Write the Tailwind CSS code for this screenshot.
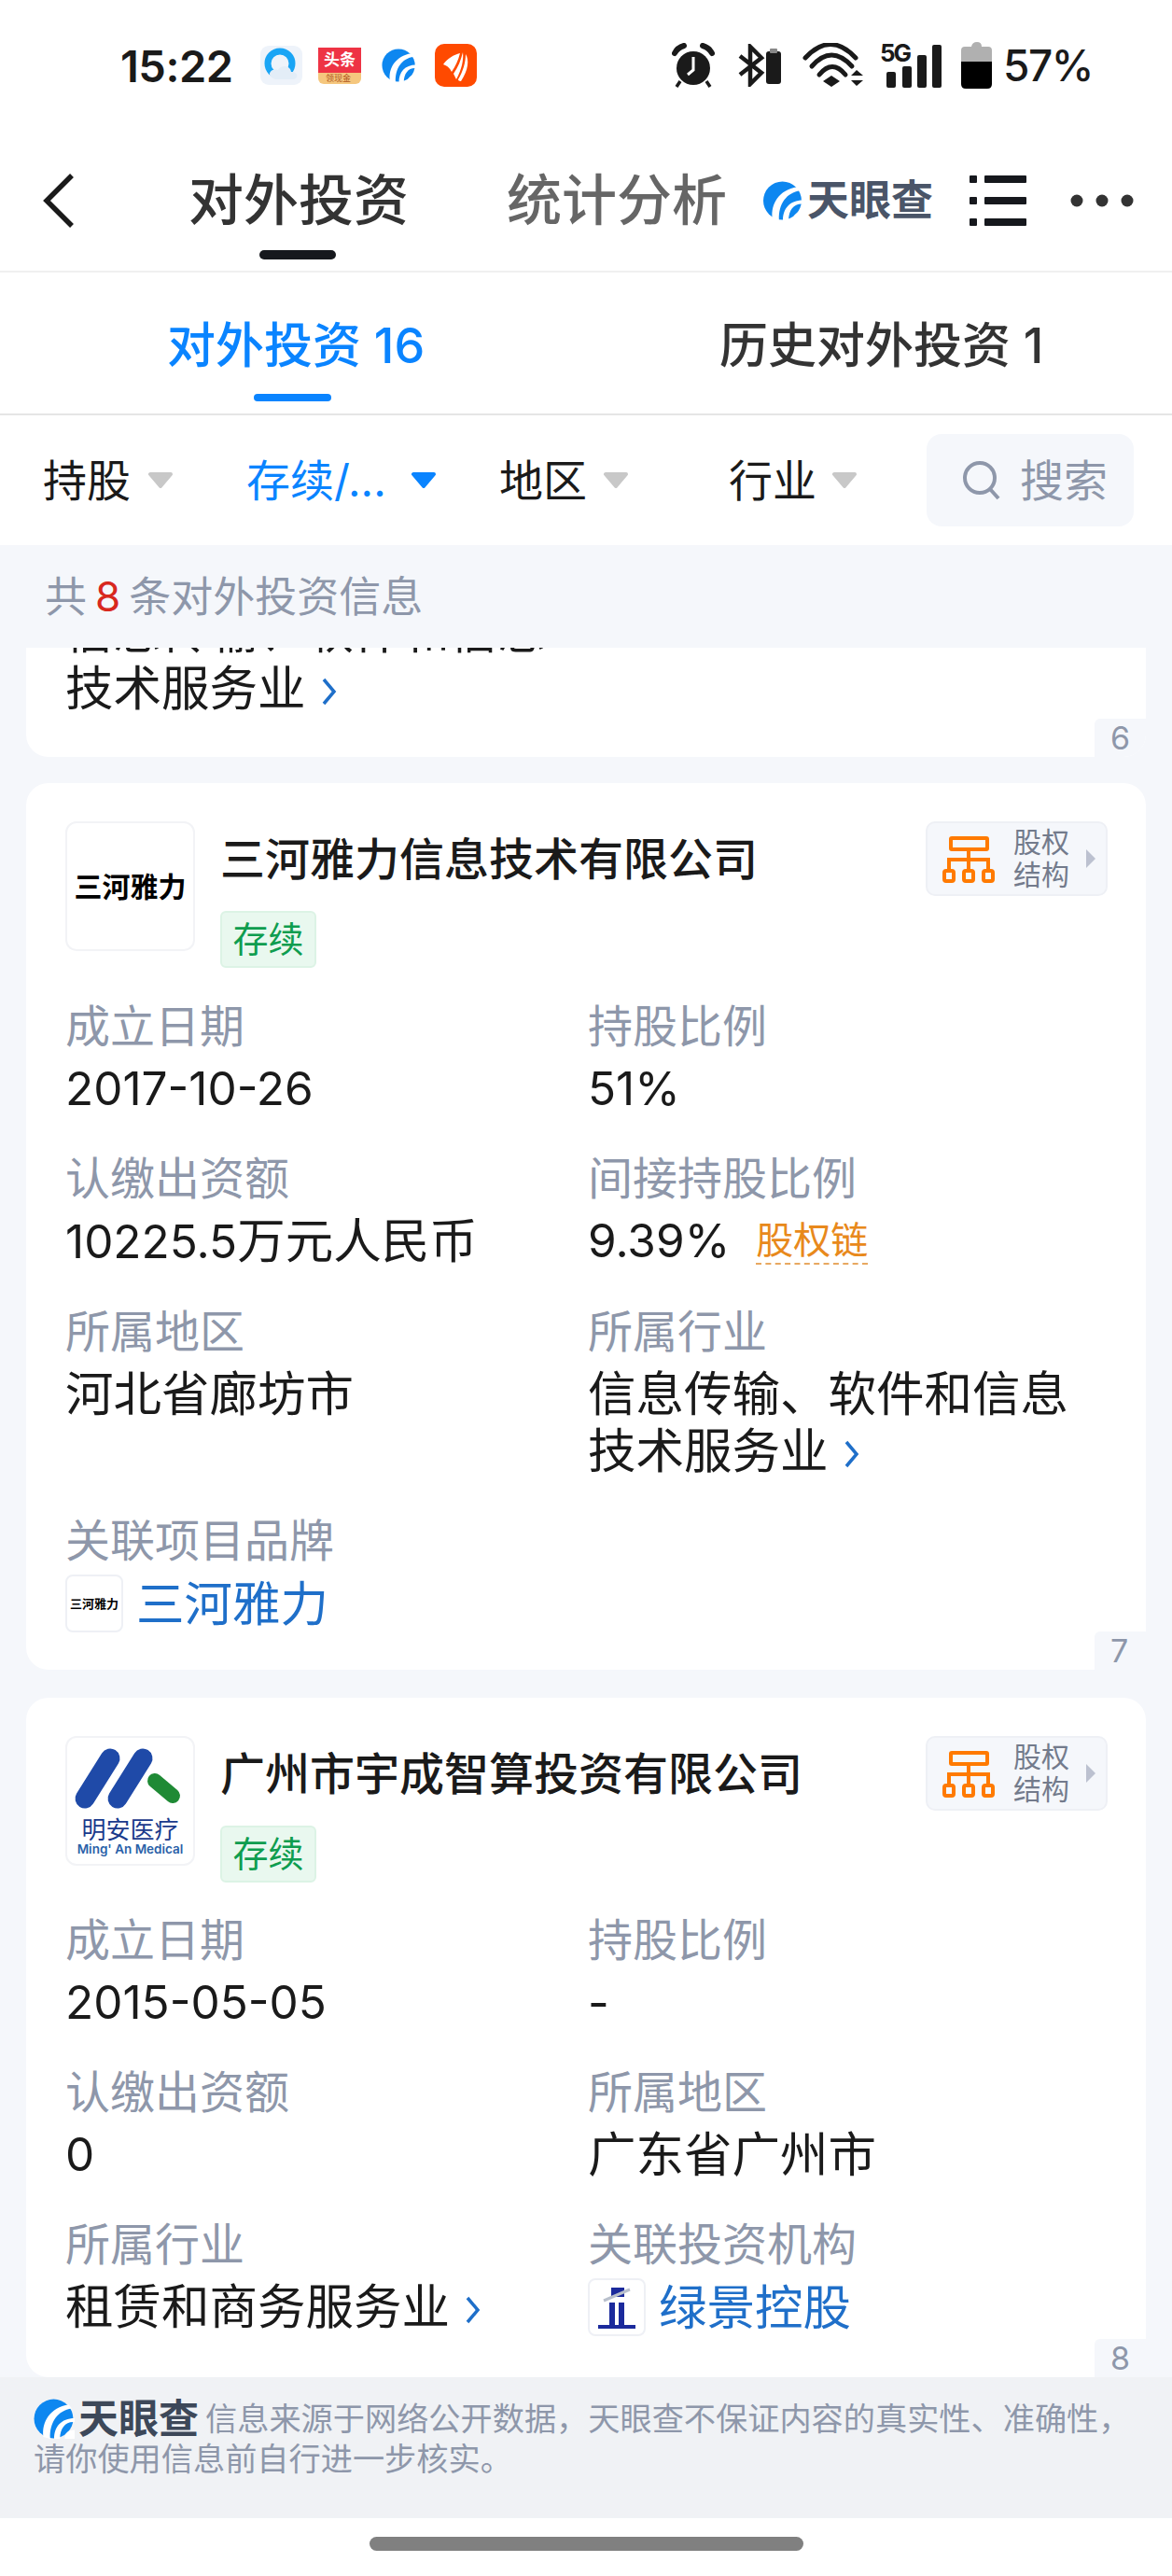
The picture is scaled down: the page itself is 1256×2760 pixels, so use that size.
<!doctype html>
<html lang="zh"><head><meta charset="utf-8"><script src="https://cdn.jsdelivr.net/npm/@tailwindcss/browser@4"></script></head>
<body>
<svg width="0" height="0" class="absolute">
<symbol id="eye" viewBox="0 0 42 41"><circle cx="20.5" cy="20.5" r="20" fill="#0d87f0"/><path d="M10 39C8 24 17 9 36 6l3 4C25 12 16 24 17 41z" fill="#fff"/><path d="M21 41C21 29 28 20 42 20v4C33 23 27 30 27 41z" fill="#fff"/><path d="M32 41c-1-5 3-9 10-9v9z" fill="#fff"/></symbol>
<symbol id="org" viewBox="0 0 58 51"><g fill="none" stroke="#ff7a00" stroke-width="4"><rect x="10" y="3" width="39" height="12" rx="1"/><path d="M29 15v21M29 26H8v10M29 26h21v10"/><rect x="3" y="38" width="10" height="11" rx="2"/><rect x="24" y="38" width="10" height="11" rx="2"/><rect x="45" y="38" width="10" height="11" rx="2"/></g></symbol>
<symbol id="chev" viewBox="0 0 17 30"><path d="M3 2l11 13L3 28" fill="none" stroke="#1f6fc9" stroke-width="3.5"/></symbol>
<symbol id="tri" viewBox="0 0 28 17"><path d="M3 2h22L14 15z" fill="currentColor" stroke="currentColor" stroke-width="4" stroke-linejoin="round"/></symbol>
</svg>
<div class="w-[1256px] h-[2760px] flex flex-col bg-white overflow-hidden text-[48px] leading-[61px] text-[#1a1a1a] font-['Inter','Noto_Sans_CJK_SC',sans-serif]">

<!-- status bar -->
<div class="h-[140px] shrink-0 flex items-center pl-[129px]">
  <span class="text-[47px] font-semibold w-[150px] tracking-[-0.5px]">15:22</span>
  <svg class="w-[45px] h-[42px] mr-[17px]" viewBox="0 0 45 42"><rect width="45" height="42" rx="9" fill="#eef3fa"/><circle cx="21" cy="19" r="13" fill="none" stroke="#1aa5f5" stroke-width="7"/><path d="M12 34c-5-4 0-10 7-8 3-6 13-5 14 2 7-1 9 7 2 8H16z" fill="#e3edf7"/></svg>
  <div class="w-[46px] h-[39px] mr-[22px] flex flex-col overflow-hidden rounded-b-[6px]">
    <div class="h-[27px] bg-[#ee3344] text-white text-[17px] leading-[27px] font-bold text-center">头条</div>
    <div class="h-[12px] bg-[#f5c77e] text-[#b0561c] text-[9px] leading-[12px] pl-[8px]">领现金</div>
  </div>
  <svg class="w-[37px] h-[38px] mr-[20px]"><use href="#eye"/></svg>
  <svg class="w-[45px] h-[46px] mr-[209px]" viewBox="0 0 45 46"><rect width="45" height="46" rx="10" fill="#ff4a00"/><g fill="#fff"><path d="M9 22C14 15 20 12 27 10 25 18 22 24 18 30 16 26 14 24 9 22z"/><path d="M30 9C31 17 29 27 23 38 22 36 21 34 20 32 25 25 28 17 30 9z"/><path d="M33 11C37 17 36 28 28 40 26 40 25 39 25 38 30 30 33 20 33 11z"/></g></svg>
  <svg class="w-[46px] h-[48px] mr-[25px]" viewBox="0 0 46 48"><circle cx="23" cy="27" r="18" fill="#1a1a1a"/><path d="M3 11Q6 5 13 3M43 11Q40 5 33 3" fill="none" stroke="#1a1a1a" stroke-width="6" stroke-linecap="round"/><path d="M9 41l-4 6M37 41l4 6" stroke="#1a1a1a" stroke-width="3.5"/><path d="M23 15v14l-6 5" fill="none" stroke="#fff" stroke-width="3"/></svg>
  <svg class="w-[46px] h-[46px] mr-[23px]" viewBox="0 0 46 46"><path d="M2 13l23 18-12 12V3l12 12L2 33" fill="none" stroke="#1a1a1a" stroke-width="4.5"/><rect x="30" y="8" width="16" height="35" rx="3" fill="#1a1a1a"/><rect x="34" y="5" width="8" height="5" rx="1" fill="#888"/></svg>
  <svg class="w-[65px] h-[48px] mr-[18px]" viewBox="0 0 65 48"><g fill="none" stroke="#1a1a1a" stroke-width="5" stroke-linecap="round"><path d="M3 16Q30 -13 57 16"/><path d="M10 25Q31 1 53 25"/><path d="M18 34Q32 17 46 34"/></g><path d="M31 35l9 6-9 6-9-6zM58 29l7 6H52zM52 40h13l-7 6z" fill="#1a1a1a"/></svg>
  <div class="w-[67px] h-[48px] mr-[20px] relative">
    <span class="absolute left-0 -top-[2px] text-[26px] leading-[26px] font-bold tracking-[-2px]">5G</span>
    <svg class="w-[67px] h-[48px]" viewBox="0 0 67 48"><g fill="#1a1a1a"><rect x="7" y="31" width="10" height="17" rx="2"/><rect x="24" y="25" width="10" height="23" rx="2"/><rect x="40" y="13" width="10" height="35" rx="2"/><rect x="56" y="2" width="10" height="46" rx="2"/></g></svg>
  </div>
  <svg class="w-[33px] h-[50px] mr-[12px]" viewBox="0 0 33 50"><path d="M0 9q0-4 4-4h7q1-5 6-5t5 5h7q4 0 4 4v13H0z" fill="#b0b0b0"/><path d="M0 21h33v24q0 5-5 5H5q-5 0-5-5z" fill="#000"/></svg>
  <span class="text-[46px] font-medium tracking-[-1.5px]">57%</span>
</div>

<!-- nav -->
<div class="h-[152px] shrink-0 flex items-center border-b-2 border-[#f0f0f0]">
  <svg class="w-[34px] h-[58px] ml-[46px] mr-[122px]" viewBox="0 0 34 58"><path d="M31 2L4 29l27 27" fill="none" stroke="#1a1a1a" stroke-width="5.5"/></svg>
  <div class="relative w-[236px] text-[59px] leading-[70px] font-medium text-[#333] mr-[105px] whitespace-nowrap">对外投资<span class="absolute left-[76px] top-[88px] w-[82px] h-[10px] rounded-full bg-[#16181d]"></span></div>
  <div class="w-[236px] text-[59px] leading-[70px] font-medium text-[#666] mr-[38px] whitespace-nowrap">统计分析</div>
  <svg class="w-[44px] h-[42px] mr-[4px]"><use href="#eye"/></svg>
  <span class="text-[45px] font-bold leading-[50px] text-[#4a5568] w-[135px] mr-[39px] whitespace-nowrap">天眼查</span>
  <svg class="w-[61px] h-[56px] mr-[47px]" viewBox="0 0 61 56"><g fill="#16181d"><rect x="0" y="1" width="8" height="8" rx="1"/><rect x="16" y="1" width="45" height="8" rx="1"/><rect x="0" y="24" width="8" height="8" rx="1"/><rect x="16" y="24" width="45" height="8" rx="1"/><rect x="0" y="47" width="8" height="8" rx="1"/><rect x="16" y="47" width="45" height="8" rx="1"/></g></svg>
  <svg class="w-[68px] h-[14px]" viewBox="0 0 68 14"><g fill="#333"><circle cx="7" cy="7" r="6.5"/><circle cx="34" cy="7" r="6.5"/><circle cx="61" cy="7" r="6.5"/></g></svg>
</div>

<!-- tabs -->
<div class="h-[153px] shrink-0 flex border-b-2 border-[#e5e5e5] bg-white pt-[6px] text-[52px] leading-[60px] font-medium">
  <div class="relative w-[628px] flex pl-[179px] items-center text-[#0a84ff] whitespace-nowrap">对外投资 16<span class="absolute left-[272px] top-[124px] w-[83px] h-[8px] rounded-full bg-[#0a84ff]"></span></div>
  <div class="flex-1 flex pl-[143px] items-center text-[#333] whitespace-nowrap">历史对外投资 1</div>
</div>

<!-- filters -->
<div class="h-[139px] shrink-0 flex items-center text-[47px] leading-[60px]">
  <div class="w-[264px] pl-[46px] flex items-center shrink-0"><span class="w-[112px]">持股</span><svg class="w-[28px] h-[17px] text-[#c8c8c8]"><use href="#tri"/></svg></div>
  <div class="w-[271px] flex items-center shrink-0 text-[#0a84ff]"><span class="w-[176px] whitespace-nowrap">存续/...</span><svg class="w-[28px] h-[17px] text-[#0a84ff]"><use href="#tri"/></svg></div>
  <div class="w-[246px] flex items-center shrink-0"><span class="w-[111px]">地区</span><svg class="w-[28px] h-[17px] text-[#c8c8c8]"><use href="#tri"/></svg></div>
  <div class="w-[212px] flex items-center shrink-0"><span class="w-[110px]">行业</span><svg class="w-[28px] h-[17px] text-[#c8c8c8]"><use href="#tri"/></svg></div>
  <div class="w-[222px] h-[99px] rounded-[16px] bg-[#f5f7fb] flex items-center pl-[38px] text-[#8e97aa] whitespace-nowrap"><svg class="w-[42px] h-[44px] mr-[20px] shrink-0" viewBox="0 0 42 44"><circle cx="19" cy="19" r="16" fill="none" stroke="#8e97aa" stroke-width="4"/><path d="M30 31l9 10" stroke="#8e97aa" stroke-width="4"/></svg>搜索</div>
</div>

<!-- count band -->
<div class="h-[110px] shrink-0 bg-[#f5f7fb] flex items-center pl-[48px] text-[45px] text-[#8e97aa] pt-[1px]"><span>共</span><span class="text-[#d8281e] text-[44px] ml-[9px] mr-[9px]">8</span><span>条对外投资信息</span></div>

<!-- list -->
<div class="h-[1853px] shrink-0 bg-[#f5f7fb] px-[28px] overflow-hidden flex flex-col text-[51.5px]">
  <div class="relative shrink-0 h-[117px] bg-white rounded-b-[24px] overflow-hidden pl-[42px]">
    <div class="-mt-[48px]">信息传输、软件和信息<br>技术服务业<svg class="inline-block w-[17px] h-[30px] ml-[16px] align-[0px]"><use href="#chev"/></svg></div>
    <span class="absolute right-0 bottom-0 w-[55px] h-[41px] bg-[#f5f7fb] rounded-tl-[6px] text-[34px] leading-[41px] text-[#8e97aa] pl-[17px]">6</span>
  </div>

  <div class="relative shrink-0 h-[950px] mt-[28px] bg-white rounded-[24px] pl-[42px] pr-[41px] pt-[41px]">
    <div class="flex">
      <div class="w-[139px] h-[139px] rounded-[12px] border-2 border-[#f2f3f6] flex items-center justify-center text-[30px] leading-[36px] font-bold text-black shrink-0 whitespace-nowrap">三河雅力</div>
      <div class="ml-[27px] flex-1">
        <div class="mt-[10px] text-[48px] font-medium">三河雅力信息技术有限公司</div>
        <div class="mt-[25px] w-[103px] h-[61px] rounded-[6px] bg-[#e9f8ef] border-2 border-[#dcf3e5] text-[#0f9d4f] text-[38px] leading-[57px] text-center">存续</div>
      </div>
      <div class="w-[195px] h-[80px] rounded-[10px] bg-[#f5f7fb] border-2 border-[#eef0f5] flex items-center pl-[15px] shrink-0">
        <svg class="w-[58px] h-[51px] mr-[19px] shrink-0"><use href="#org"/></svg>
        <div class="text-[30px] leading-[35px] text-[#737b8c] w-[60px] shrink-0">股权<br>结构</div>
        <span class="ml-[18px] w-0 h-0 border-y-[10px] border-y-transparent border-l-[10px] border-l-[#bcc1d0]"></span>
      </div>
    </div>
    <div class="grid grid-cols-[560px_1fr] gap-y-[35px] mt-[32px]">
      <div class="flex flex-col gap-[6px]"><div class="text-[48px] text-[#8e97aa]">成立日期</div><div class="text-[49.5px]">2017-10-26</div></div>
      <div class="flex flex-col gap-[6px]"><div class="text-[48px] text-[#8e97aa]">持股比例</div><div class="text-[49.5px]">51%</div></div>
      <div class="flex flex-col gap-[6px]"><div class="text-[48px] text-[#8e97aa]">认缴出资额</div><div><span class="text-[49.5px]">10225.5</span>万元人民币</div></div>
      <div class="flex flex-col gap-[6px]"><div class="text-[48px] text-[#8e97aa]">间接持股比例</div><div class="flex items-center"><span class="text-[49.5px]">9.39%</span><span class="ml-[28px] text-[40px] leading-[48px] text-[#e8891c] border-b-2 border-dashed border-[#e8a860]">股权链</span></div></div>
      <div class="flex flex-col gap-[6px]"><div class="text-[48px] text-[#8e97aa]">所属地区</div><div>河北省廊坊市</div></div>
      <div class="flex flex-col gap-[6px]"><div class="text-[48px] text-[#8e97aa]">所属行业</div><div class="whitespace-nowrap">信息传输、软件和信息<br>技术服务业<svg class="inline-block w-[17px] h-[30px] ml-[16px] align-[0px]"><use href="#chev"/></svg></div></div>
      <div class="flex flex-col gap-[6px] col-span-2"><div class="text-[48px] text-[#8e97aa]">关联项目品牌</div><div class="flex items-center"><span class="w-[62px] h-[62px] rounded-[8px] border-2 border-[#eef0f5] flex items-center justify-center text-[13px] font-bold text-black shrink-0 whitespace-nowrap">三河雅力</span><span class="ml-[14px] text-[#1f6fc9]">三河雅力</span></div></div>
    </div>
    <span class="absolute right-0 bottom-0 w-[55px] h-[41px] bg-[#f5f7fb] rounded-tl-[6px] text-[34px] leading-[41px] text-[#8e97aa] pl-[17px]">7</span>
  </div>

  <div class="relative shrink-0 h-[728px] mt-[30px] bg-white rounded-[24px] pl-[42px] pr-[41px] pt-[41px]">
    <div class="flex">
      <div class="w-[139px] h-[139px] rounded-[12px] border-2 border-[#f2f3f6] shrink-0 flex flex-col items-center overflow-hidden">
        <svg class="w-[135px] h-[86px] shrink-0" viewBox="0 0 135 86"><g fill="none" stroke-linecap="round"><path d="M46 22L19 65M81 22L54 65" stroke="#1f4aa8" stroke-width="21"/><path d="M94 46l19 16" stroke="#1f8a35" stroke-width="16"/></g></svg>
        <div class="text-[26px] leading-[25px] text-[#1a3a8c] whitespace-nowrap">明安医疗</div>
        <div class="text-[13.5px] leading-[14px] font-semibold text-[#2a5fa8] whitespace-nowrap mt-[1px]">Ming' An Medical</div>
      </div>
      <div class="ml-[27px] flex-1">
        <div class="mt-[10px] text-[48px] font-medium">广州市宇成智算投资有限公司</div>
        <div class="mt-[25px] w-[103px] h-[61px] rounded-[6px] bg-[#e9f8ef] border-2 border-[#dcf3e5] text-[#0f9d4f] text-[38px] leading-[57px] text-center">存续</div>
      </div>
      <div class="w-[195px] h-[80px] rounded-[10px] bg-[#f5f7fb] border-2 border-[#eef0f5] flex items-center pl-[15px] shrink-0">
        <svg class="w-[58px] h-[51px] mr-[19px] shrink-0"><use href="#org"/></svg>
        <div class="text-[30px] leading-[35px] text-[#737b8c] w-[60px] shrink-0">股权<br>结构</div>
        <span class="ml-[18px] w-0 h-0 border-y-[10px] border-y-transparent border-l-[10px] border-l-[#bcc1d0]"></span>
      </div>
    </div>
    <div class="grid grid-cols-[560px_1fr] gap-y-[35px] mt-[31px]">
      <div class="flex flex-col gap-[6px]"><div class="text-[48px] text-[#8e97aa]">成立日期</div><div class="text-[49.5px]">2015-05-05</div></div>
      <div class="flex flex-col gap-[6px]"><div class="text-[48px] text-[#8e97aa]">持股比例</div><div class="text-[49.5px]">-</div></div>
      <div class="flex flex-col gap-[6px]"><div class="text-[48px] text-[#8e97aa]">认缴出资额</div><div class="text-[49.5px]">0</div></div>
      <div class="flex flex-col gap-[6px]"><div class="text-[48px] text-[#8e97aa]">所属地区</div><div>广东省广州市</div></div>
      <div class="flex flex-col gap-[6px]"><div class="text-[48px] text-[#8e97aa]">所属行业</div><div>租赁和商务服务业<svg class="inline-block w-[17px] h-[30px] ml-[16px] align-[0px]"><use href="#chev"/></svg></div></div>
      <div class="flex flex-col gap-[6px]"><div class="text-[48px] text-[#8e97aa]">关联投资机构</div><div class="flex items-center"><span class="w-[62px] h-[62px] rounded-[8px] border-2 border-[#eef0f5] flex items-center justify-center shrink-0"><svg class="w-[44px] h-[50px]" viewBox="0 0 44 50"><path d="M16 4h14v10H16z" fill="#1b2a9c"/><path d="M8 18l28-12" stroke="#b9c0cc" stroke-width="3"/><path d="M14 20h6v24h-6zM24 20h6v24h-6zM2 44h40v4H2z" fill="#1b2a9c"/></svg></span><span class="ml-[14px] text-[#1f6fc9]">绿景控股</span></div></div>
    </div>
    <span class="absolute right-0 bottom-0 w-[55px] h-[41px] bg-[#f5f7fb] rounded-tl-[6px] text-[34px] leading-[41px] text-[#8e97aa] pl-[17px]">8</span>
  </div>
</div>

<!-- footer -->
<div class="h-[151px] shrink-0 bg-[#f0f2f5] pt-[23px] pl-[36px] text-[34.2px] leading-[43px] text-[#8e97aa]">
  <div class="flex items-center whitespace-nowrap"><svg class="w-[44px] h-[43px] mr-[4px] shrink-0"><use href="#eye"/></svg><span class="w-[136px] text-[43px] font-bold text-[#3d4859]">天眼查</span>信息来源于网络公开数据，天眼查不保证内容的真实性、准确性，</div>
  <div>请你使用信息前自行进一步核实。</div>
</div>

<!-- home bar -->
<div class="flex-1 flex justify-center pt-[20px]"><div class="w-[465px] h-[15px] rounded-full bg-[#808080]"></div></div>
</div>
</body></html>
